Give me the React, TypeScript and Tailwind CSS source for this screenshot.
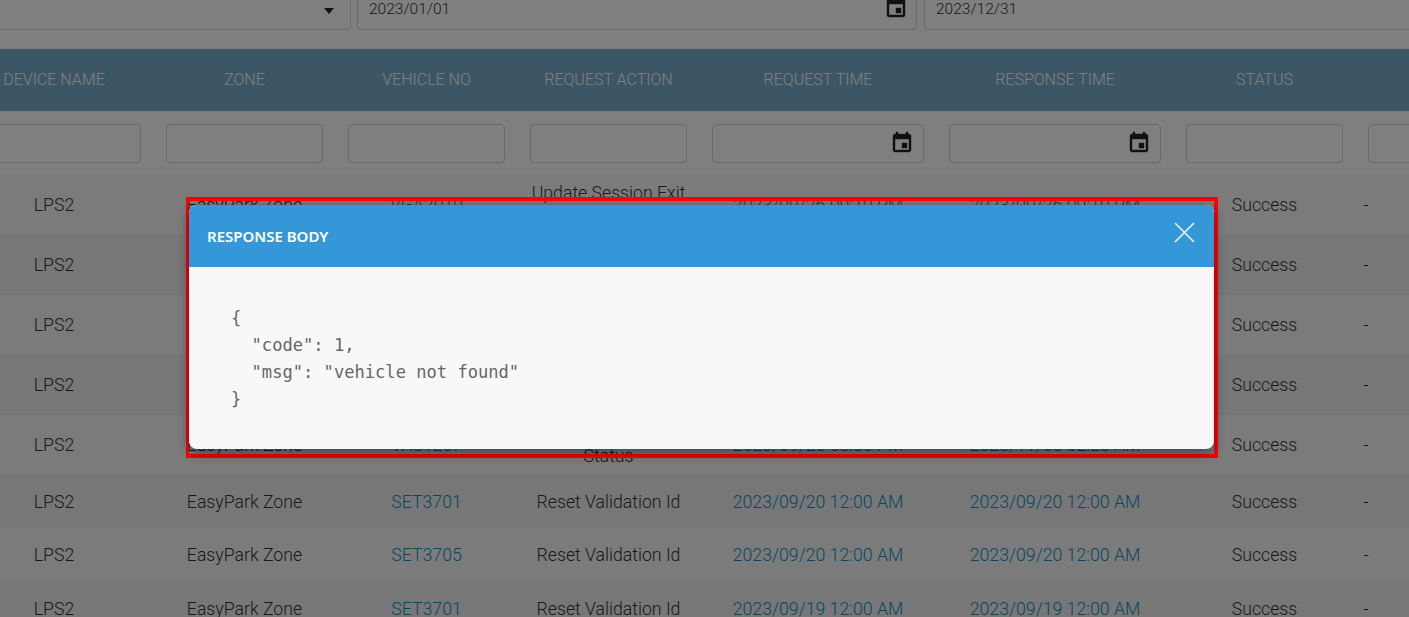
const COLUMNS = ["DEVICE NAME", "ZONE", "VEHICLE NO", "REQUEST ACTION", "REQUEST TIME", "RESPONSE TIME", "STATUS", ""];

const GRID = "grid grid-cols-[199px_182px_182px_182px_237px_237px_182px_200px]";

type Row = {
  zone?: string;
  vehicle?: string;
  action?: string;
  request?: string;
  response?: string;
  height: string;
  shade: string;
};

// rows 2-4 sit fully behind the modal, so only their outer cells are filled
const ROWS: Row[] = [
  { zone: "EasyPark Zone", vehicle: "VGA2019", action: "Update Session Exit Information Data", request: "2023/09/26 09:10 PM", response: "2023/09/26 09:10 PM", height: "h-[60px]", shade: "bg-[#f6f6f6]" },
  { height: "h-[60px]", shade: "bg-[#eeeeee]" },
  { height: "h-[60px]", shade: "bg-[#f6f6f6]" },
  { height: "h-[60px]", shade: "bg-[#eeeeee]" },
  { zone: "EasyPark Zone", vehicle: "VAS1207", action: "Update Session Exit Status", request: "2023/09/26 08:30 PM", response: "2023/11/06 02:26 AM", height: "h-[60px]", shade: "bg-[#f6f6f6]" },
  { zone: "EasyPark Zone", vehicle: "SET3701", action: "Reset Validation Id", request: "2023/09/20 12:00 AM", response: "2023/09/20 12:00 AM", height: "h-[53px] pt-[1px]", shade: "bg-[#eeeeee]" },
  { zone: "EasyPark Zone", vehicle: "SET3705", action: "Reset Validation Id", request: "2023/09/20 12:00 AM", response: "2023/09/20 12:00 AM", height: "h-[54px]", shade: "bg-[#f6f6f6]" },
  { zone: "EasyPark Zone", vehicle: "SET3701", action: "Reset Validation Id", request: "2023/09/19 12:00 AM", response: "2023/09/19 12:00 AM", height: "h-[54px]", shade: "bg-[#eeeeee]" },
];

function CalendarIcon() {
  return (
    <svg width="24" height="24" viewBox="0 0 24 24" fill="#222222" stroke="#222222" strokeWidth="0.4" className="shrink-0">
      <path d="M17 12h-5v5h5v-5zM16 1v2H8V1H6v2H5c-1.11 0-1.99.9-1.99 2L3 19c0 1.1.89 2 2 2h14c1.1 0 2-.9 2-2V5c0-1.1-.9-2-2-2h-1V1h-2zm3 18H5V8h14v11z" />
    </svg>
  );
}

function FilterBox({ date }: { date?: boolean }) {
  return (
    <div className="flex h-[39px] items-center justify-end rounded border border-[#d4d4d4] pr-[9px]">
      {date && <CalendarIcon />}
    </div>
  );
}

function Cell({ children, className = "" }: { children?: React.ReactNode; className?: string }) {
  return (
    <div className={`flex items-center justify-center px-3 text-center leading-[23px] ${className}`}>
      {children}
    </div>
  );
}

export default function App() {
  return (
    <div className="relative h-[617px] w-full overflow-hidden bg-white font-['Roboto',sans-serif] font-light text-[#333333]">
      {/* top filters */}
      <div className="-mt-[11px] flex h-[60px] items-start gap-[6px]">
        <div className="-ml-[10px] flex h-[41px] w-[361px] shrink-0 items-center justify-end rounded border border-[#d4d4d4] pr-[16px]">
          <div className="mt-[3px] h-0 w-0 border-x-[5px] border-t-[6px] border-x-transparent border-t-[#222222]" />
        </div>
        <div className="flex h-[41px] w-[560px] shrink-0 items-center justify-between rounded border border-[#d4d4d4] pl-[11px] pr-[8px]">
          <span className="text-[15.5px]">2023/01/01</span>
          <span className="pb-[3px]"><CalendarIcon /></span>
        </div>
        <div className="ml-[1px] flex h-[41px] w-[600px] shrink-0 items-center rounded border border-[#d4d4d4] pl-[11px]">
          <span className="text-[15.5px]">2023/12/31</span>
        </div>
      </div>

      {/* table */}
      <div className="-ml-[45.5px] w-[1601px]">
        <div className={`${GRID} h-[62px] bg-[#78accd] pb-[2px] text-[16px] text-white`}>
          {COLUMNS.map((title, i) => (
            <Cell key={i}>{title}</Cell>
          ))}
        </div>
        <div className={`${GRID} h-[64px] items-center bg-white`}>
          {COLUMNS.map((title, i) => (
            <div key={i} className="px-[12.5px]">
              <FilterBox date={title === "REQUEST TIME" || title === "RESPONSE TIME"} />
            </div>
          ))}
        </div>
        {ROWS.map((row, i) => (
          <div key={i} className={`${GRID} ${row.height} ${row.shade} text-[17.7px]`}>
            <Cell>LPS2</Cell>
            <Cell>{row.zone}</Cell>
            <Cell className="text-[#0f8fc0]">{row.vehicle}</Cell>
            <Cell>{row.action}</Cell>
            <Cell className="text-[#0f8fc0]">{row.request}</Cell>
            <Cell className="text-[#0f8fc0]">{row.response}</Cell>
            <Cell>Success</Cell>
            <div className="flex items-center pl-[8px]">-</div>
          </div>
        ))}
      </div>

      {/* overlay */}
      <div className="absolute inset-0 bg-black/50" />

      {/* highlighted modal */}
      <div className="absolute left-[186px] top-[197px] h-[261px] w-[1032px] border-[4px] border-l-[3.5px] border-[#ff0000]" />
      <div className="absolute left-[189px] top-[205px] flex h-[244px] w-[1025px] flex-col overflow-hidden rounded-lg bg-[#f8f8f8] shadow-[0_4px_12px_rgba(0,0,0,0.45)]">
        <div className="flex h-[62px] shrink-0 items-center justify-between bg-[#3498d8] px-[18px]">
          <span className="font-['Noto_Sans',sans-serif] text-[15px] font-semibold text-white">RESPONSE BODY</span>
          <svg width="23" height="23" viewBox="0 0 23 23" stroke="#ffffff" strokeWidth="1.6" className="-mt-[8px] opacity-90">
            <path d="M2 2 L21 21 M21 2 L2 21" />
          </svg>
        </div>
        <pre className="pl-[42px] pt-[38px] font-['DejaVu_Sans_Mono',monospace] text-[17.1px] font-normal leading-[27px] text-[#666666]">
{`{
  "code": 1,
  "msg": "vehicle not found"
}`}
        </pre>
      </div>
    </div>
  );
}
